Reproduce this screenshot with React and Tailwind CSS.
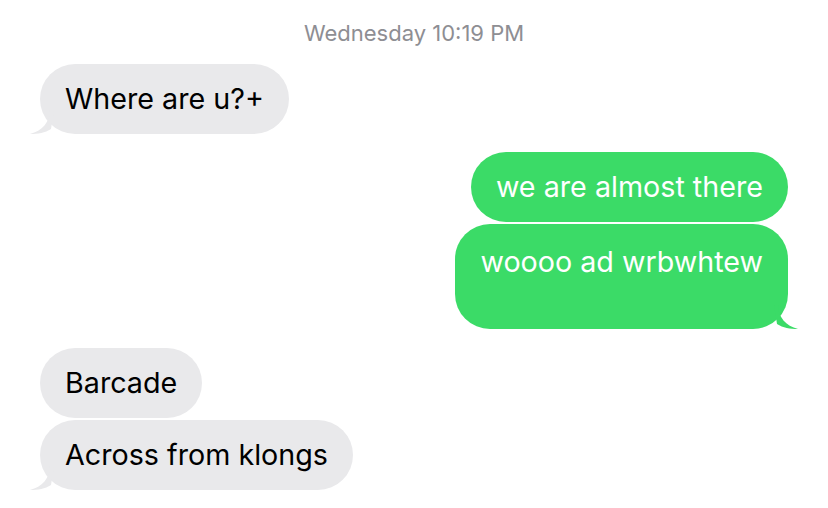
import React from 'react';

const Tail = ({ side, color }) => (
  <svg
    width="24"
    height="24"
    viewBox="0 0 24 24"
    className={side === 'left' ? 'absolute -left-[10px] bottom-0' : 'absolute -right-[10px] bottom-0 -scale-x-100'}
  >
    <path d="M20 0 C20 12 12 21 0 24 C8 24 15 23 21 19 L24 0 Z" fill={color} />
  </svg>
);

const Bubble = ({ from, text, tail, className = '' }) => {
  const mine = from === 'me';
  return (
    <div
      className={`relative rounded-[35px] px-[25px] text-[28.7px] leading-[36px] ${
        mine ? 'bg-[#3bdb67] text-white' : 'bg-[#e9e9eb] text-black'
      } ${className}`}
    >
      {tail && <Tail side={mine ? 'right' : 'left'} color={mine ? '#3bdb67' : '#e9e9eb'} />}
      <span className="relative">{text}</span>
    </div>
  );
};

const App = () => {
  return (
    <div className="w-[828px] h-[508px] bg-white overflow-hidden font-['Inter','Helvetica_Neue',sans-serif]">
      <div className="pt-[20px] text-center text-[22px] leading-[26px] text-[#8e8e93]">
        Wednesday 10:19 PM
      </div>

      <div className="flex flex-col px-[40px] mt-[18px]">
        <div className="flex justify-start">
          <Bubble from="them" text="Where are u?+" tail className="py-[17px]" />
        </div>

        <div className="flex flex-col items-end mt-[18px] gap-[2px]">
          <Bubble from="me" text="we are almost there" className="py-[17px]" />
          <Bubble from="me" text="woooo ad wrbwhtew" tail className="pt-[20px] pb-[49px]" />
        </div>

        <div className="flex flex-col items-start mt-[19px] gap-[2px]">
          <Bubble from="them" text="Barcade" className="py-[17px]" />
          <Bubble from="them" text="Across from klongs" tail className="py-[17px]" />
        </div>
      </div>
    </div>
  );
};

export default App;
